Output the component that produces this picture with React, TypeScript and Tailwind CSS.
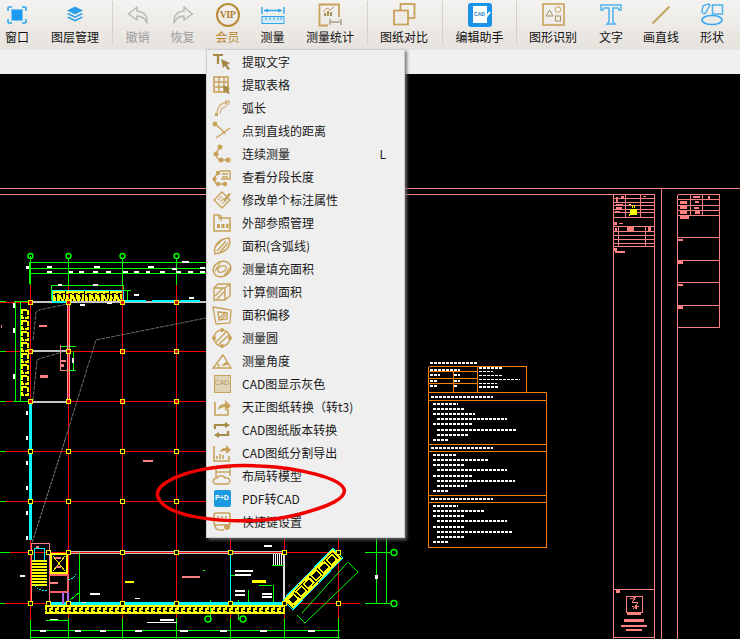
import React from "react";

const GOLD = "#c8a25a";
const BLUE = "#3aa9ee";

const Svg = ({ w = 20, h = 20, children }: { w?: number; h?: number; children: React.ReactNode }) => (
    <svg width={w} height={h} viewBox={`0 0 ${w} ${h}`} fill="none">{children}</svg>
);

const toolIcons: Record<string, React.ReactNode> = {
    window: (
        <Svg w={20} h={18}>
            <path d="M1 5V2a1 1 0 0 1 1-1h3M15 1h3a1 1 0 0 1 1 1v3M1 13v3a1 1 0 0 0 1 1h3M15 17h3a1 1 0 0 0 1-1v-3" stroke="#2ea6f2" strokeWidth="1.6" />
            <rect x="4.5" y="3.5" width="11" height="11" fill="#1b9cf0" stroke="#7cc8f5" />
        </Svg>
    ),
    layers: (
        <Svg w={18} h={18}>
            <path d="M9 0.5 17 4.5 9 8.5 1 4.5Z" fill="#2b9fe8" />
            <path d="M2.5 7 9 10.3 15.5 7 17 8 9 12 1 8Z" fill="#2b9fe8" />
            <path d="M2.5 10.5 9 13.8 15.5 10.5 17 11.5 9 15.5 1 11.5Z" fill="#2b9fe8" />
        </Svg>
    ),
    undo: (
        <Svg w={22} h={20}>
            <path d="M10 2 1.5 9 10 15V11C15 11 18 13 20 18 20.5 11 17 6.5 10 6Z" stroke="#b9b7b4" strokeWidth="1.4" strokeLinejoin="round" />
        </Svg>
    ),
    redo: (
        <Svg w={22} h={20}>
            <path d="M12 2 20.5 9 12 15V11C7 11 4 13 2 18 1.5 11 5 6.5 12 6Z" stroke="#b9b7b4" strokeWidth="1.4" strokeLinejoin="round" />
        </Svg>
    ),
    vip: (
        <div className="flex h-[24px] w-[24px] items-center justify-center rounded-full border-2 border-[#b98a35] font-['Liberation_Serif',serif] text-[10px] font-bold tracking-[-0.5px] text-[#b0802c]">VIP</div>
    ),
    measure: (
        <Svg w={24} h={20}>
            <path d="M1 2v7M23 2v7M3 5.5h18" stroke="#34a5e8" strokeWidth="1.4" />
            <path d="M3 5.5 7 3.5v4ZM21 5.5 17 3.5v4Z" fill="#34a5e8" />
            <rect x="1" y="11.5" width="22" height="7" fill="#d6edf9" stroke="#34a5e8" />
            <path d="M5 12v3M9 12v3M13 12v3M17 12v3M20 12v3" stroke="#34a5e8" />
        </Svg>
    ),
    stats: (
        <Svg w={24} h={24}>
            <path d="M21 14V1.5H1.5v21H10" stroke={GOLD} strokeWidth="1.8" />
            <path d="M7 13V10M10 13V8M13 13V9" stroke="#a78c50" strokeWidth="2" />
            <path d="M5 9 9 5l3 2 4-3" stroke="#b79a5c" />
            <path d="M12 16v6M23 16v6M13 19h9" stroke="#8b7a55" />
        </Svg>
    ),
    compare: (
        <Svg w={23} h={23}>
            <rect x="7.5" y="1" width="14" height="14" stroke={GOLD} strokeWidth="1.8" />
            <rect x="1" y="7.5" width="14" height="14" fill="#efece8" stroke={GOLD} strokeWidth="1.8" />
        </Svg>
    ),
    assistant: (
        <div className="relative flex h-[24px] w-[24px] items-center justify-center rounded-[3px] bg-[#1c92e8]">
            <div className="flex h-[17px] w-[14px] items-center justify-center bg-white font-['Liberation_Sans',sans-serif] text-[5px] font-bold text-[#1c78c8]">CAD</div>
            <svg className="absolute right-[1px] top-[7px]" width="9" height="12" viewBox="0 0 9 12" fill="none">
                <path d="M1 11 8 2" stroke="#ffffff" strokeWidth="2" />
            </svg>
        </div>
    ),
    recognise: (
        <Svg w={23} h={23}>
            <rect x="1" y="1" width="21" height="21" stroke={GOLD} strokeWidth="1.6" />
            <path d="M4 13 7.5 7 11 13Z" stroke="#a8935f" />
            <circle cx="16" cy="6.5" r="2.8" stroke={GOLD} />
            <rect x="13.5" y="13" width="5" height="5" stroke="#a8935f" />
        </Svg>
    ),
    text: (
        <Svg w={22} h={21}>
            <path d="M1 1h20v5h-2l-1-2h-5v14l2 2H7l2-2V4H4L3 6H1Z" stroke="#4db3ec" strokeWidth="1.5" />
        </Svg>
    ),
    line: (
        <Svg w={20} h={20}>
            <path d="M1.5 18.5 18.5 1.5" stroke={GOLD} strokeWidth="2" />
        </Svg>
    ),
    shape: (
        <Svg w={24} h={24}>
            <rect x="12.5" y="2" width="10" height="9" stroke="#4db3ec" strokeWidth="1.5" />
            <ellipse cx="12" cy="17" rx="10" ry="4.5" stroke={BLUE} strokeWidth="1.6" />
            <path d="M3 3 2 8c0 3 3 4 4 1l4-7-2-1Z" stroke={BLUE} strokeWidth="1.3" />
        </Svg>
    ),
};

const G = ({ children }: { children: React.ReactNode }) => (
    <Svg>
        <g stroke={GOLD} strokeWidth="1.4">{children}</g>
    </Svg>
);

const menuItems: { label: string; key?: string; icon: React.ReactNode }[] = [
    { label: "提取文字", icon: <G><path d="M1 3h10M6 3v9" strokeWidth="2.2" stroke="#a88a48" /><path d="M9 7l9 4-3 2 3 4-2 1-3-4-2 2Z" fill="#a88a48" stroke="none" /></G> },
    { label: "提取表格", icon: <G><rect x="2" y="2" width="14" height="15" strokeWidth="1.6" /><path d="M2 7h14M2 12h14M7 2v15M12 2v15" /><path d="M11 10l7 3-2 2 2 3-2 1-2-3-2 2Z" fill="#a88a48" stroke="none" /></G> },
    { label: "弧长", icon: <G><path d="M5 16C5 9 9 5 15 4" opacity="0.75" /><path d="M8 16C8 12 11 9 15 8" opacity="0.6" /><rect x="3" y="15" width="3" height="3" fill={GOLD} stroke="none" /><rect x="14" y="3" width="3" height="3" stroke={GOLD} strokeWidth="1" /></G> },
    { label: "点到直线的距离", icon: <G><path d="M3 3l7 6M4 17 18 7" /><circle cx="3" cy="3" r="1.7" fill={GOLD} /><path d="M10 9l3 4" /></G> },
    { label: "连续测量", key: "L", icon: <G><path d="M8 3 4 9c0 4 2 7 5 7h7" /><circle cx="8" cy="3" r="1.8" fill={GOLD} /><circle cx="4" cy="10" r="1.8" fill={GOLD} /><circle cx="9" cy="16" r="1.8" fill={GOLD} /><circle cx="16" cy="16" r="1.8" fill={GOLD} /></G> },
    { label: "查看分段长度", icon: <G><path d="M8 4h10v8H9M10 7h6M10 10h6" /><path d="M6 6 2 11c0 3 1 5 3 6h8" /><circle cx="6" cy="6" r="1.5" fill={GOLD} /><circle cx="2.5" cy="12" r="1.5" fill={GOLD} /><circle cx="6" cy="17" r="1.5" fill={GOLD} /><circle cx="13" cy="17" r="1.5" fill={GOLD} /></G> },
    { label: "修改单个标注属性", icon: <G><path d="M2 10l8-8 8 8-8 8Z" /><path d="M6 10l4-4M8 12l4-4M10 14l4-4" opacity="0.7" /><path d="M11 10l6-7 2 1-6 8Z" fill={GOLD} stroke="none" /></G> },
    { label: "外部参照管理", icon: <G><path d="M2 2h5v3h11v13H2Z" strokeWidth="1.6" /><rect x="5" y="11" width="3" height="4" fill={GOLD} stroke="none" /><rect x="9.5" y="11" width="3" height="4" fill={GOLD} stroke="none" /><rect x="14" y="11" width="2.5" height="4" fill={GOLD} stroke="none" /><path d="M9 2v6" /></G> },
    { label: "面积(含弧线)", icon: <G><path d="M3 18C1 10 6 3 17 2c2 6 0 14-14 16Z" strokeWidth="1.5" /><path d="M5 15 14 5M8 16l8-9M3 11l7-7" /></G> },
    { label: "测量填充面积", icon: <G><ellipse cx="10" cy="10" rx="9" ry="7.5" strokeWidth="1.5" transform="rotate(-25 10 10)" /><ellipse cx="10" cy="10" rx="4.5" ry="3" transform="rotate(-25 10 10)" /><path d="M3 12 8 4M12 17l6-8" /></G> },
    { label: "计算侧面积", icon: <G><path d="M2 6h11v12H2ZM2 6l4-4h12v12l-5 4M13 6l5-4" /><path d="M3 14l8-8M5 17l8-8" /></G> },
    { label: "面积偏移", icon: <G><path d="M1 2l18 3-1 13-14 1Z" strokeWidth="1.3" /><path d="M6 7l9 1v6l-8 1Z" /><path d="M7 13l7-6M9 14l5-4" /></G> },
    { label: "测量圆", icon: <G><circle cx="10" cy="10" r="8" strokeWidth="1.5" /><path d="M4 14 14 4M7 16 17 7" /><circle cx="10" cy="2" r="1.3" fill={GOLD} /><circle cx="2" cy="10" r="1.3" fill={GOLD} /><circle cx="18" cy="10" r="1.3" fill={GOLD} /><circle cx="10" cy="18" r="1.3" fill={GOLD} /></G> },
    { label: "测量角度", icon: <G><path d="M1 17h18L11 4Z" strokeWidth="1.4" /><path d="M7 17c0-3-1-4-2-5" /><path d="M9 15l6-5 1 4Z" fill={GOLD} stroke="none" /></G> },
    { label: "CAD图显示灰色", icon: <div className="flex h-[18px] w-[17px] items-center justify-center border border-[#c8a25a] bg-[#dfd3b8] font-['Liberation_Sans',sans-serif] text-[7px] text-[#b89a5a]">CAD</div> },
    { label: "天正图纸转换（转t3)", icon: <G><path d="M3 5v13h13v-6" strokeWidth="1.6" /><path d="M6 13c0-4 3-6 7-6V3l6 6-6 5v-4c-3 0-5 1-7 3Z" fill={GOLD} stroke="none" /></G> },
    { label: "CAD图纸版本转换", icon: <G><path d="M3 9V5h11M3 15h13v-4" strokeWidth="2.2" stroke="#a88a48" /><path d="M13 2l5 3-5 3ZM7 12l-5 3 5 3Z" fill="#a88a48" stroke="none" /></G> },
    { label: "CAD图纸分割导出", icon: <G><path d="M2 3v15h15v-5" strokeWidth="1.6" /><path d="M5 16v-3M8 16v-5M11 16v-4" strokeWidth="1.6" /><path d="M8 9c0-2 2-4 6-4V2l5 5-5 4V8c-3 0-5 0-6 1Z" fill={GOLD} stroke="none" /></G> },
    { label: "布局转模型", icon: <G><path d="M4 11V2h14v8" /><path d="M4 6h14" /><path d="M3 18c-3-2-2-6 2-6 1-3 7-3 8 0 5-1 6 4 3 6Z" fill="#efefef" strokeWidth="1.5" /></G> },
    { label: "PDF转CAD", icon: <div className="flex h-[17px] w-[17px] items-center justify-center rounded-[2px] bg-[#1c9ae0] font-['Liberation_Sans',sans-serif] text-[7px] font-bold text-white">P+D</div> },
    { label: "快捷键设置", icon: <G><rect x="2" y="1" width="16" height="12" rx="2" strokeWidth="1.6" /><path d="M5 5h2M9 5h2M13 5h2M5 9h10" strokeWidth="1.5" /><path d="M3 13c0 5 3 5 9 5" /><circle cx="15" cy="15" r="3" fill={GOLD} stroke="none" /></G> },
];

const tools: { label: string; icon: string; w: string; color?: string }[] = [
    { label: "撤销", icon: "undo", w: "w-[45px]", color: "text-[#9c9c9c]" },
    { label: "恢复", icon: "redo", w: "w-[45px]", color: "text-[#9c9c9c]" },
    { label: "会员", icon: "vip", w: "w-[45px]", color: "text-[#b8862f]" },
    { label: "测量", icon: "measure", w: "w-[45px]" },
    { label: "测量统计", icon: "stats", w: "w-[70px]" },
];

const ToolItem = ({ label, icon, w, color }: { label: string; icon: string; w: string; color?: string }) => (
    <div className={`flex shrink-0 flex-col items-center ${w}`}>
        <div className="flex h-[29px] items-center justify-center">{toolIcons[icon]}</div>
        <span className={`h-[16px] text-[12px] leading-[15px] ${color ?? "text-[#111]"}`}>{label}</span>
    </div>
);

const Sep = ({ className = "" }: { className?: string }) => <div className={`mt-[1px] h-[44px] w-[1px] shrink-0 bg-[#d4d0cb] ${className}`} />;

// the drawing's grid
const COLS = [30.5, 68.5, 122.5, 176.5, 230.5, 284.5];
const ROWS = [302.5, 351.5, 401.5, 451.5, 501.5, 552.5, 603.5];

const blobsWhite: number[][] = [
    [26, 266, 3, 3], [47, 266, 5, 2], [94, 266, 6, 2], [148, 266, 6, 2], [182, 261, 7, 2], [200, 267, 5, 2],
    [47, 271, 5, 2], [69, 271, 4, 2], [79, 271, 5, 2], [93, 271, 5, 2], [106, 271, 5, 2], [123, 271, 5, 2], [134, 271, 5, 2],
    [146, 271, 4, 2], [160, 271, 5, 2], [172, 268, 5, 2], [176, 271, 5, 2], [188, 271, 5, 2], [200, 271, 5, 2],
    [58, 284, 4, 2], [93, 284, 5, 2], [134, 294, 5, 2], [189, 297, 5, 2], [80, 304, 5, 2], [107, 302, 5, 2], [13, 303, 2, 5],
    [13, 328, 2, 5], [13, 374, 2, 5], [72, 358, 2, 5], [26, 411, 2, 4], [26, 436, 2, 4], [26, 461, 2, 4], [26, 486, 2, 4],
    [26, 511, 2, 4], [26, 536, 2, 4], [20, 575, 5, 2], [235, 570, 18, 2], [235, 574, 16, 2],
    [235, 590, 10, 2], [235, 594, 10, 2], [262, 593, 10, 2], [262, 596, 10, 2], [90, 593, 10, 2], [82, 602, 4, 1], [135, 598, 5, 1],
    [160, 619, 14, 2], [147, 622, 30, 1], [50, 619, 8, 1], [40, 630, 6, 2], [75, 630, 6, 2], [100, 630, 6, 2], [135, 630, 7, 2],
    [180, 630, 8, 2], [220, 630, 7, 2], [260, 630, 7, 2], [308, 630, 7, 2], [264, 545, 8, 2], [375, 575, 3, 4],
];

const docBars: number[][] = [
    [430, 362, 47, 2], [430, 369, 30, 2], [430, 374, 10, 2], [454, 374, 6, 2], [430, 380, 7, 2], [454, 380, 6, 2], [430, 385, 8, 2], [454, 385, 4, 2],
    [479, 367, 23, 2], [479, 371, 14, 1], [479, 375, 24, 1], [479, 379, 41, 1], [479, 383, 18, 1], [479, 386, 20, 2],
    [431, 396, 62, 2], [433, 403, 25, 2], [433, 408, 32, 2], [433, 413, 42, 2], [437, 418, 70, 2], [433, 423, 40, 2], [437, 429, 80, 2], [437, 434, 32, 2], [433, 439, 16, 2],
    [431, 447, 62, 2], [433, 454, 23, 2], [433, 459, 55, 2], [433, 464, 32, 2], [437, 469, 70, 2], [433, 475, 40, 2], [437, 480, 78, 2], [437, 485, 30, 2], [433, 490, 15, 2],
    [431, 498, 62, 2], [433, 505, 25, 2], [433, 510, 52, 2], [433, 515, 32, 2], [437, 520, 70, 2], [433, 526, 32, 2], [437, 531, 76, 2], [437, 536, 28, 2], [433, 541, 15, 2],
];

const StairCells = ({ x, y, n, step, w, h, horizontal }: { x: number; y: number; n: number; step: number; w: number; h: number; horizontal?: boolean }) => (
    <>
        {Array.from({ length: n }).map((_, i) => (
            <rect
                key={i}
                x={horizontal ? x + i * step : x}
                y={horizontal ? y : y + i * step}
                width={w}
                height={h}
                fill="none"
                stroke="#ffff00"
                strokeWidth="2"
                strokeDasharray="5 1"
            />
        ))}
    </>
);

const Drawing = () => (
    <svg className="block h-full w-full" viewBox="0 74 740 565" shapeRendering="crispEdges" fill="none">
        {/* frame */}
        <g stroke="#ff8080">
            <path d="M0 188.5H740M0 194.5H654.5M677.5 194.5H719.5M613.5 194.5V639M654.5 194.5V639M661.5 188.5V639M677.5 194.5V639M719.5 194.5V327.5" />
            <path d="M613 198.5H654M613 202.5H654M613 205.5H654M613 209.5H654M613 212.5H654M613 217.5H654M625.5 194V217M640.5 194V217" />
            <path d="M613 226.5H654M613 231.5H654M613 235.5H654M613 239.5H654M613 243.5H654M613 246.5H654M618.5 226V246M645.5 226V246" />
            <path d="M613 589.5H654M613 637.5H654M626.5 596.5H642.5V612.5H626.5Z" />
            <path d="M677 199.5H719M677 205.5H719M677 210.5H719M677 215.5H719M677 237.5H719M677 260.5H719M677 282.5H719M677 305.5H719M677 327.5H719M690.5 194V215M702.5 194V215" />
            <path d="M630 599l6-2-4 5 6 1-4 5 5-2M632 606l5 3" />
        </g>
        <g fill="#ff8080">
            {[[616, 197, 2, 5], [621, 196, 3, 2], [616, 204, 7, 1], [616, 207, 6, 2], [615, 211, 5, 1], [643, 196, 3, 1], [614, 222, 3, 3], [619, 223, 4, 1], [627, 227, 7, 4], [648, 227, 3, 4], [615, 228, 2, 3], [614, 248, 3, 3], [615, 251, 10, 2], [616, 590, 4, 3], [627, 613, 14, 2], [624, 619, 20, 3], [621, 625, 26, 2], [626, 629, 16, 2], [680, 216, 9, 3], [693, 196, 7, 2], [708, 196, 2, 3], [680, 201, 7, 3], [695, 201, 4, 2], [680, 206, 7, 3], [694, 207, 5, 2], [680, 211, 7, 3], [695, 211, 5, 3], [678, 239, 5, 2], [678, 261, 5, 3], [678, 284, 5, 2], [678, 306, 5, 3]].map((r, i) => (
                <rect key={i} x={r[0]} y={r[1]} width={r[2]} height={r[3]} />
            ))}
        </g>
        <rect x="630" y="209" width="7" height="6" fill="#ffff00" />
        <path d="M629 214v2M632 205v3M634 205v3M629 204h2" stroke="#ffff00" />

        {/* grid */}
        <g stroke="#ff0000">
            {ROWS.slice(0, 5).map((y) => <path key={y} d={`M0 ${y}H206`} />)}
            <path d="M0 552.5H340M0 603.5H360" />
            <path d="M30.5 285V639M68.5 262V639M122.5 262V639M176.5 262V639M230.5 538V639M284.5 538V639M338.5 538V639" />
        </g>

        {/* green dims */}
        <g stroke="#00ff00">
            <path d="M30 262.5H206M30 268.5H206M30 273.5H206M30 256V285M68.5 258V285M122.5 258V285M176.5 258V285" strokeWidth="1" />
            <path d="M29.5 262V284" strokeWidth="2" />
            <path d="M51 285.5H123M51 285V300M123 285V296M123 290.5H131M127 291V302" />
            <path d="M15.5 302V401M20.5 302V401M0 301.5H6M14 301H30M0 351.5H6M0 401.5H6M0 451.5H6M0 501.5H6M0 552.5H10M0 603.5H5M13 401.5H30M60 346.5H76M60 345V351M73.5 351V371M68 370.5H76" />
            <path d="M30 620V639M68.5 618V639M122.5 618V639M176.5 618V639M230.5 618V639M284.5 618V639M338.5 618V639M30 630.5H340M30 637.5H340M46 620.5H68M80 592L70 600" />
            <path d="M376.5 538V603M386.5 538V603M365 552.5H390M365 603.5H390" />
            <path d="M302 613 347 563M305 623 358 572M297 615 305 623M348 562 358 572" shapeRendering="auto" />
            <path d="M79 552V603M259 585H272M273 585V603M203 570H205M231 575H248M248 590V603M210 600V620M238 600V620" />
        </g>
        {[[30.5, 256], [68.5, 256], [122.5, 256], [176.5, 256]].map((c) => (
            <circle key={c[0]} cx={c[0]} cy={c[1]} r="2.5" stroke="#00ff00" strokeWidth="1.4" shapeRendering="auto" />
        ))}
        {[[394, 552.5], [394, 603.5], [208, 619], [243, 619]].map((c) => (
            <circle key={c[0] + c[1]} cx={c[0]} cy={c[1]} r="3" stroke="#00ff00" strokeWidth="1.4" shapeRendering="auto" />
        ))}

        {/* walls */}
        <g stroke="#c4c4c4">
            <path d="M32 301.5H206M32 351H68M32 401.5H68" strokeWidth="2" />
            <path d="M68 551.5H285M68 553.5H285" />
            <path d="M284 553V603" strokeWidth="2" stroke="#e0e0e0" />
            <path d="M273.5 554V565M275.5 554V565M277.5 554V565M279.5 554V565M281.5 554V565" stroke="#ffffff" />
            <path d="M272 565.5H284" stroke="#00ff00" />
        </g>
        <path d="M67.5 303V400M69.5 303V400" stroke="#ff9a9a" strokeWidth="1.5" />
        <path d="M60.5 345V370.5H68" stroke="#ff8080" strokeWidth="1.5" />
        <g stroke="#00ffff">
            <path d="M30.5 401V540" strokeWidth="3" />
            <path d="M52 301.5H66M124 301H146M152 301H176M180 301H200" strokeWidth="2" />
            <path d="M52 290.5H123M52 290V301M123 290V301" />
            <path d="M230.5 554V603" />
            <path d="M46 603.5H284" strokeWidth="3" />
        </g>

        {/* grey slab lines */}
        <g stroke="#6e6e6e" strokeDasharray="4 1" shapeRendering="auto">
            <path d="M33 340 36 312 39 310 68 304" />
            <path d="M33 400 37 360 39 359 62 352" />
            <path d="M65 440 96 340 206 318" />
            <path d="M65 440 32 543" strokeDasharray="3 1" stroke="#8a8a8a" />
        </g>

        {/* stairs + core */}
        <rect x="21" y="310" width="8" height="90" fill="#000" />
        <StairCells x={22} y={310} n={8} step={11} w={6} h={8} />
        <StairCells x={54} y={292} n={11} step={6.3} w={4} h={6} horizontal />
        <path d="M53 299.5H122" stroke="#ffff00" strokeWidth="2" strokeDasharray="3 1" />
        <StairCells x={46} y={606} n={40} step={6} w={4} h={7} horizontal />
        <rect x="46" y="605.5" width="238" height="8" stroke="#ffff00" />
        <g stroke="#ff8080">
            <path d="M31 543.5H49V603M31 543V603" />
            <path d="M49 574.5H68V592H49" strokeWidth="2" stroke="#ff6060" />
        </g>
        <rect x="51" y="554" width="16" height="19" stroke="#ffff00" strokeWidth="1.5" />
        <path d="M53 556 65 571M65 556 53 571" stroke="#ffff00" />
        <g stroke="#ffff00" strokeWidth="1.5">
            {[0, 1, 2, 3, 4, 5, 6, 7, 8].map((i) => <path key={i} d={`M32 ${561 + i * 3}H47`} />)}
        </g>
        <path d="M34 548h10v13M34 548v13" stroke="#00ffff" />
        <path d="M35 585c2 5 8 6 12 5M68 580c4-1 7-3 8-6" stroke="#00ffff" strokeDasharray="2 1" />
        <path d="M55 558h6M50 583h8" stroke="#ff8080" strokeWidth="2" />
        <path d="M63 592v12M68 592v12" stroke="#b060e0" strokeWidth="1.5" />

        {/* diagonal wing */}
        <g transform="rotate(-46 290 607)">
            <rect x="290" y="597" width="72" height="14" stroke="#00ffff" />
            <rect x="292" y="598.5" width="68" height="11" stroke="#ffff00" strokeWidth="2" />
            {Array.from({ length: 6 }).map((_, i) => (
                <rect key={i} x={294 + i * 11} y="600.5" width="8" height="7" stroke="#ffff00" strokeWidth="1.5" />
            ))}
        </g>

        {/* pink notes */}
        <g fill="#ff8080">
            {[[39, 325, 8, 2], [40, 375, 8, 3], [61, 360, 5, 2], [61, 364, 3, 3], [143, 460, 10, 2], [1, 325, 1, 3], [182, 576, 18, 2], [56, 566, 5, 2], [36, 546, 3, 2]].map((r, i) => (
                <rect key={i} x={r[0]} y={r[1]} width={r[2]} height={r[3]} />
            ))}
        </g>
        <g fill="#ffff00">
            <rect x="125" y="581" width="9" height="2" />
            <rect x="252" y="580" width="14" height="3" />
        </g>

        {/* column markers */}
        {ROWS.slice(0, 3).flatMap((y) =>
            COLS.slice(0, 4).map((x) => <rect key={`${x}-${y}`} x={x - 2} y={y - 2} width="4" height="4" fill="#d00000" stroke="#ffff00" />)
        )}
        {ROWS.slice(3, 5).flatMap((y) =>
            COLS.slice(0, 4).map((x) => <rect key={`${x}-${y}`} x={x - 2} y={y - 2} width="4" height="4" fill="#000" stroke="#ffff00" />)
        )}
        {[30.5, 48, 68.5, 122.5, 176.5, 230.5, 284.5, 338.5].flatMap((x) =>
            [552.5, 603.5].map((y) => <rect key={`b${x}-${y}`} x={x - 2} y={y - 2} width="4" height="4" fill="#000" stroke="#ffff00" />)
        )}

        <g fill="#ffffff">
            {blobsWhite.map((r, i) => <rect key={i} x={r[0]} y={r[1]} width={r[2]} height={r[3]} />)}
        </g>

        {/* spec sheet */}
        <g stroke="#ff8000">
            <path d="M428.5 366.5H526.5V392M428.5 366.5V547.5H546.5V392.5H428.5M428.5 371.5H477M428.5 378.5H477M428.5 383.5H477M453.5 371V392M477.5 366V392" />
            <path d="M428 400.5H546M428 444.5H546M428 451.5H546M428 495.5H546M428 502.5H546" />
        </g>
        <g stroke="#ffffff" strokeDasharray="3 1">
            {docBars.map((r, i) => <path key={i} d={`M${r[0]} ${r[1] + r[3] / 2}H${r[0] + r[2]}`} strokeWidth={r[3]} />)}
        </g>
    </svg>
);

export default function App() {
    return (
        <div className="relative flex h-[639px] w-[740px] flex-col overflow-hidden bg-[#f0f0f0] font-['Noto_Sans_CJK_SC','Noto_Sans',sans-serif]">
            <div className="flex h-[50px] shrink-0 bg-gradient-to-b from-[#f4f3f1] to-[#e6e2dd]">
                <ToolItem label="窗口" icon="window" w="w-[34px]" />
                <div className="ml-[4px]"><ToolItem label="图层管理" icon="layers" w="w-[74px]" /></div>
                <Sep />
                <div className="ml-[2px] flex">
                    {tools.map((t) => <ToolItem key={t.label} {...t} />)}
                </div>
                <Sep className="ml-[2px]" />
                <ToolItem label="图纸对比" icon="compare" w="w-[72px]" />
                <Sep className="ml-[2px]" />
                <ToolItem label="编辑助手" icon="assistant" w="w-[73px]" />
                <Sep />
                <ToolItem label="图形识别" icon="recognise" w="w-[72px]" />
                <ToolItem label="文字" icon="text" w="w-[44px]" />
                <ToolItem label="画直线" icon="line" w="w-[56px]" />
                <ToolItem label="形状" icon="shape" w="w-[46px]" />
            </div>
            <div className="h-[24px] shrink-0 bg-[#f0f0f0]" />
            <div className="min-h-0 flex-1 bg-black">
                <Drawing />
            </div>

            {/* dropdown */}
            <div className="absolute left-[206px] top-[49px] flex w-[199px] flex-col border border-[#cfcfcf] bg-[#efefef] pb-[4px] shadow-[2px_2px_3px_rgba(110,110,110,0.9)]">
                {menuItems.map((item) => (
                    <div key={item.label} className="flex h-[23px] shrink-0 items-center pl-[5px] text-[12px] text-[#1a1a1a]">
                        <div className="mr-[10px] flex w-[20px] items-center justify-center">{item.icon}</div>
                        <span className="whitespace-nowrap">{item.label}</span>
                        {item.key && <span className="ml-auto pr-[18px]">{item.key}</span>}
                    </div>
                ))}
            </div>

            {/* hand-drawn circle */}
            <svg className="pointer-events-none absolute left-[150px] top-[460px]" width="200" height="70" viewBox="0 0 200 70" fill="none">
                <path d="M110 6C70 3 30 12 14 24 3 32 6 42 22 50 50 62 108 65 150 54 180 46 197 38 194 29 190 18 150 8 110 6Z" stroke="#f20000" strokeWidth="3.5" />
            </svg>
        </div>
    );
}
